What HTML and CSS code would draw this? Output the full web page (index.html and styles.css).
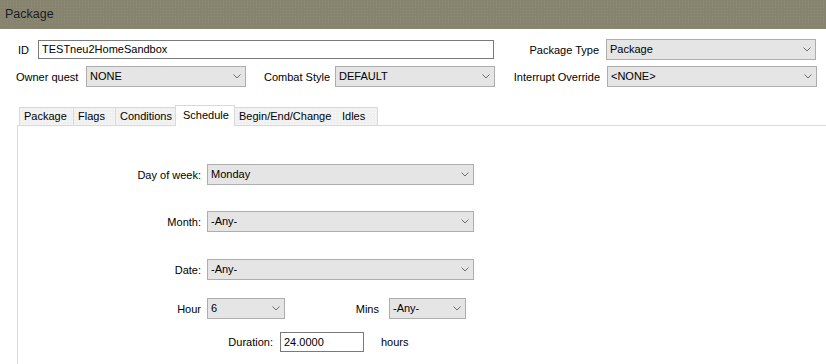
FILE: index.html
```html
<!DOCTYPE html>
<html lang="en">
<head>
  <meta charset="UTF-8">
  <title>Package</title>
  <link rel="stylesheet" href="styles.css">
</head>
<body>
  <!-- Title bar -->
  <div class="titlebar">Package</div>

  <!-- Header fields -->
  <div class="fields">
    <div class="row">
      <label class="lbl lbl-id">ID</label>
      <div class="textbox tb-id">TESTneu2HomeSandbox</div>
      <label class="lbl lbl-right">Package Type</label>
      <div class="combo cb-wide"><span>Package</span><svg class="chev" width="8" height="5" viewBox="0 0 8 5"><polyline points="0.5,0.5 4,4 7.5,0.5" fill="none" stroke="#6d6d6d" stroke-width="1"/></svg></div>
    </div>
    <div class="row">
      <label class="lbl lbl-owner">Owner quest</label>
      <div class="combo cb-mid"><span>NONE</span><svg class="chev" width="8" height="5" viewBox="0 0 8 5"><polyline points="0.5,0.5 4,4 7.5,0.5" fill="none" stroke="#6d6d6d" stroke-width="1"/></svg></div>
      <label class="lbl lbl-combat">Combat Style</label>
      <div class="combo cb-mid"><span>DEFAULT</span><svg class="chev" width="8" height="5" viewBox="0 0 8 5"><polyline points="0.5,0.5 4,4 7.5,0.5" fill="none" stroke="#6d6d6d" stroke-width="1"/></svg></div>
      <label class="lbl lbl-right">Interrupt Override</label>
      <div class="combo cb-wide"><span>&lt;NONE&gt;</span><svg class="chev" width="8" height="5" viewBox="0 0 8 5"><polyline points="0.5,0.5 4,4 7.5,0.5" fill="none" stroke="#6d6d6d" stroke-width="1"/></svg></div>
    </div>
  </div>

  <!-- Tabs -->
  <div class="tabs">
    <div class="tab t-package">Package</div>
    <div class="tab t-flags">Flags</div>
    <div class="tab t-cond">Conditions</div>
    <div class="tab t-sched active">Schedule</div>
    <div class="tab t-begin">Begin/End/Change</div>
    <div class="tab t-idles">Idles</div>
  </div>

  <div class="panel">
    <div class="srow r-day">
      <label class="slbl">Day of week:</label>
      <div class="combo cb-long"><span>Monday</span><svg class="chev" width="8" height="5" viewBox="0 0 8 5"><polyline points="0.5,0.5 4,4 7.5,0.5" fill="none" stroke="#6d6d6d" stroke-width="1"/></svg></div>
    </div>
    <div class="srow r-month">
      <label class="slbl">Month:</label>
      <div class="combo cb-long"><span>-Any-</span><svg class="chev" width="8" height="5" viewBox="0 0 8 5"><polyline points="0.5,0.5 4,4 7.5,0.5" fill="none" stroke="#6d6d6d" stroke-width="1"/></svg></div>
    </div>
    <div class="srow r-date">
      <label class="slbl">Date:</label>
      <div class="combo cb-long"><span>-Any-</span><svg class="chev" width="8" height="5" viewBox="0 0 8 5"><polyline points="0.5,0.5 4,4 7.5,0.5" fill="none" stroke="#6d6d6d" stroke-width="1"/></svg></div>
    </div>
    <div class="srow r-hour">
      <label class="slbl">Hour</label>
      <div class="combo cb-short"><span>6</span><svg class="chev" width="8" height="5" viewBox="0 0 8 5"><polyline points="0.5,0.5 4,4 7.5,0.5" fill="none" stroke="#6d6d6d" stroke-width="1"/></svg></div>
      <label class="mlbl">Mins</label>
      <div class="combo cb-short2"><span>-Any-</span><svg class="chev" width="8" height="5" viewBox="0 0 8 5"><polyline points="0.5,0.5 4,4 7.5,0.5" fill="none" stroke="#6d6d6d" stroke-width="1"/></svg></div>
    </div>
    <div class="srow r-dur">
      <label class="dlbl">Duration:</label>
      <div class="textbox tb-dur">24.0000</div>
      <span class="unit">hours</span>
    </div>
  </div>
</body>
</html>
```

FILE: styles.css
```css
body {
  margin: 0;
  background: #ffffff;
  font-family: "Liberation Sans", Arial, sans-serif;
  font-size: 11px;
  color: #000;
  width: 826px;
  height: 364px;
  overflow: hidden;
}
.titlebar {
  height: 29px;
  line-height: 29px;
  padding-left: 5px;
  font-size: 12.5px;
  color: #1c1c24;
  background-color: #86846f;
  background-image: radial-gradient(rgba(255, 255, 255, 0.07) 0.6px, transparent 0.8px);
  background-size: 3px 3px;
}
.fields {
  padding-top: 10px;
}
.row {
  display: flex;
  align-items: center;
  height: 21px;
  margin-bottom: 6px;
}
.lbl {
  display: block;
  white-space: nowrap;
}
.lbl-id {
  margin-left: 18px;
  width: 20px;
}
.lbl-right {
  width: 105px;
  padding-right: 7px;
  text-align: right;
}
.lbl-owner {
  margin-left: 16px;
  width: 70px;
}
.lbl-combat {
  margin-left: 18px;
  width: 71px;
}
.textbox {
  box-sizing: border-box;
  background: #fff;
  border: 1px solid #7a7a7a;
  padding-left: 3px;
  line-height: 17px;
  white-space: nowrap;
}
.tb-id {
  width: 456px;
  height: 19px;
}
.combo {
  box-sizing: border-box;
  position: relative;
  height: 21px;
  line-height: 19px;
  background: #e5e5e5;
  border: 1px solid #adadad;
  padding-left: 3px;
  white-space: nowrap;
}
.chev {
  position: absolute;
  right: 4px;
  top: 7px;
}
.cb-wide {
  width: 210px;
}
.cb-mid {
  width: 160px;
}
.tabs {
  display: flex;
  align-items: flex-end;
  height: 20px;
  margin-top: 18px;
  padding-left: 19px;
}
.tab {
  box-sizing: border-box;
  height: 18px;
  line-height: 17px;
  padding-left: 4px;
  background-color: #f0f0f0;
  background-image: radial-gradient(rgba(255, 255, 255, 0.7) 0.6px, transparent 0.8px);
  background-size: 3px 3px;
  border: 1px solid #d9d9d9;
  border-bottom: none;
  border-right: none;
  white-space: nowrap;
}
.tab.active {
  height: 21px;
  margin-bottom: -1px;
  line-height: 18px;
  padding-left: 7px;
  background: #ffffff;
  border-right: 1px solid #d9d9d9;
  position: relative;
}
.t-begin, .t-idles {
  border-left: none;
}
.t-idles {
  border-right: 1px solid #d9d9d9;
}
.t-package { width: 54px; }
.t-flags { width: 42px; }
.t-cond { width: 60px; }
.t-sched { width: 60px; }
.t-begin { width: 103px; }
.t-idles { width: 40px; }
.panel {
  margin-left: 17px;
  height: 200px;
  border-top: 1px solid #d9d9d9;
  border-left: 1px solid #d9d9d9;
  padding-top: 38px;
}
.srow {
  display: flex;
  align-items: center;
}
.slbl {
  width: 183px;
  padding-right: 6px;
  text-align: right;
  white-space: nowrap;
}
.cb-long {
  width: 267px;
}
.r-month {
  margin-top: 26px;
}
.r-date {
  margin-top: 27px;
}
.r-hour {
  margin-top: 18px;
}
.cb-short {
  width: 78px;
}
.mlbl {
  width: 94px;
  padding-right: 10px;
  text-align: right;
}
.cb-short2 {
  width: 77px;
}
.r-dur {
  margin-top: 13px;
}
.dlbl {
  width: 255px;
  padding-right: 7px;
  text-align: right;
}
.tb-dur {
  width: 84px;
  height: 20px;
  line-height: 18px;
}
.unit {
  margin-left: 17px;
}
```
